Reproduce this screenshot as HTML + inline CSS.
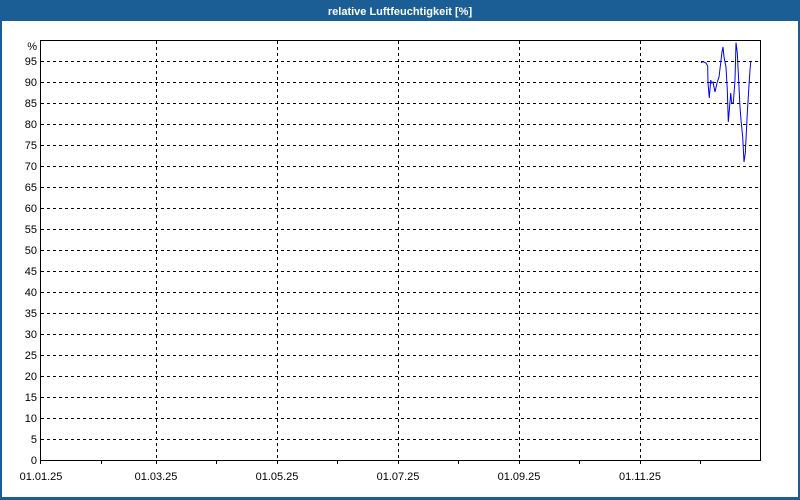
<!DOCTYPE html>
<html><head><style>
html,body{margin:0;padding:0;background:#fff}
body{width:800px;height:500px;position:relative;overflow:hidden;font-family:"Liberation Sans",sans-serif}
</style></head><body>
<svg width="800" height="500" xmlns="http://www.w3.org/2000/svg" style="position:absolute;left:0;top:0">
<rect x="0" y="0" width="800" height="500" fill="#1b5e96"/>
<rect x="2" y="21" width="796" height="476" fill="#fff"/>
<text x="400" y="15" fill="#fff" font-size="11" font-weight="bold" text-anchor="middle" font-family="Liberation Sans, sans-serif">relative Luftfeuchtigkeit [%]</text>
<g stroke="#000" stroke-width="1" stroke-dasharray="3,3" shape-rendering="crispEdges">
<line x1="41" y1="61.5" x2="760" y2="61.5"/><line x1="41" y1="82.5" x2="760" y2="82.5"/><line x1="41" y1="103.5" x2="760" y2="103.5"/><line x1="41" y1="124.5" x2="760" y2="124.5"/><line x1="41" y1="145.5" x2="760" y2="145.5"/><line x1="41" y1="166.5" x2="760" y2="166.5"/><line x1="41" y1="187.5" x2="760" y2="187.5"/><line x1="41" y1="208.5" x2="760" y2="208.5"/><line x1="41" y1="229.5" x2="760" y2="229.5"/><line x1="41" y1="250.5" x2="760" y2="250.5"/><line x1="41" y1="271.5" x2="760" y2="271.5"/><line x1="41" y1="292.5" x2="760" y2="292.5"/><line x1="41" y1="313.5" x2="760" y2="313.5"/><line x1="41" y1="334.5" x2="760" y2="334.5"/><line x1="41" y1="355.5" x2="760" y2="355.5"/><line x1="41" y1="376.5" x2="760" y2="376.5"/><line x1="41" y1="397.5" x2="760" y2="397.5"/><line x1="41" y1="418.5" x2="760" y2="418.5"/><line x1="41" y1="439.5" x2="760" y2="439.5"/>
<line x1="156.5" y1="41" x2="156.5" y2="460"/><line x1="277.5" y1="41" x2="277.5" y2="460"/><line x1="398.5" y1="41" x2="398.5" y2="460"/><line x1="519.5" y1="41" x2="519.5" y2="460"/><line x1="640.5" y1="41" x2="640.5" y2="460"/>
</g>
<rect x="40.5" y="40.5" width="720" height="420" fill="none" stroke="#000" stroke-width="1" shape-rendering="crispEdges"/>
<g stroke="#000" shape-rendering="crispEdges">
<line x1="101.5" y1="460" x2="101.5" y2="464"/><line x1="216.5" y1="460" x2="216.5" y2="464"/><line x1="337.5" y1="460" x2="337.5" y2="464"/><line x1="458.5" y1="460" x2="458.5" y2="464"/><line x1="579.5" y1="460" x2="579.5" y2="464"/><line x1="700.5" y1="460" x2="700.5" y2="464"/>
<line x1="156.5" y1="460" x2="156.5" y2="464"/><line x1="277.5" y1="460" x2="277.5" y2="464"/><line x1="398.5" y1="460" x2="398.5" y2="464"/><line x1="519.5" y1="460" x2="519.5" y2="464"/><line x1="640.5" y1="460" x2="640.5" y2="464"/><line x1="40.5" y1="460" x2="40.5" y2="464"/>
</g>
<g font-size="11" fill="#000" text-anchor="end" font-family="Liberation Sans, sans-serif">
<text x="37" y="50">%</text>
<text x="37" y="65">95</text><text x="37" y="86">90</text><text x="37" y="107">85</text><text x="37" y="128">80</text><text x="37" y="149">75</text><text x="37" y="170">70</text><text x="37" y="191">65</text><text x="37" y="212">60</text><text x="37" y="233">55</text><text x="37" y="254">50</text><text x="37" y="275">45</text><text x="37" y="296">40</text><text x="37" y="317">35</text><text x="37" y="338">30</text><text x="37" y="359">25</text><text x="37" y="380">20</text><text x="37" y="401">15</text><text x="37" y="422">10</text><text x="37" y="443">5</text><text x="37" y="464">0</text>
</g>
<g font-size="11" fill="#000" text-anchor="middle" font-family="Liberation Sans, sans-serif">
<text x="41" y="480">01.01.25</text><text x="156" y="480">01.03.25</text><text x="277" y="480">01.05.25</text><text x="398" y="480">01.07.25</text><text x="519" y="480">01.09.25</text><text x="640" y="480">01.11.25</text>
</g>
<polyline fill="none" stroke="#0000ff" stroke-width="1" points="701,62.7 703,61.7 706,63 707.7,66 708,83 709.3,98 710.7,80 711.7,83 713,82 715,92 717,83 719,77 720.7,63 722,52 723,47 724,57 726,67 727.3,90 728.3,122 729.3,110 730.7,93 731.7,103 733.3,103 735,80 736,42.7 737.3,53 738.3,73 740,107 741,120 742.7,137 744,162 745.3,153 747.3,113 748.7,90 750,70 750.7,62"/>
</svg>
</body></html>
